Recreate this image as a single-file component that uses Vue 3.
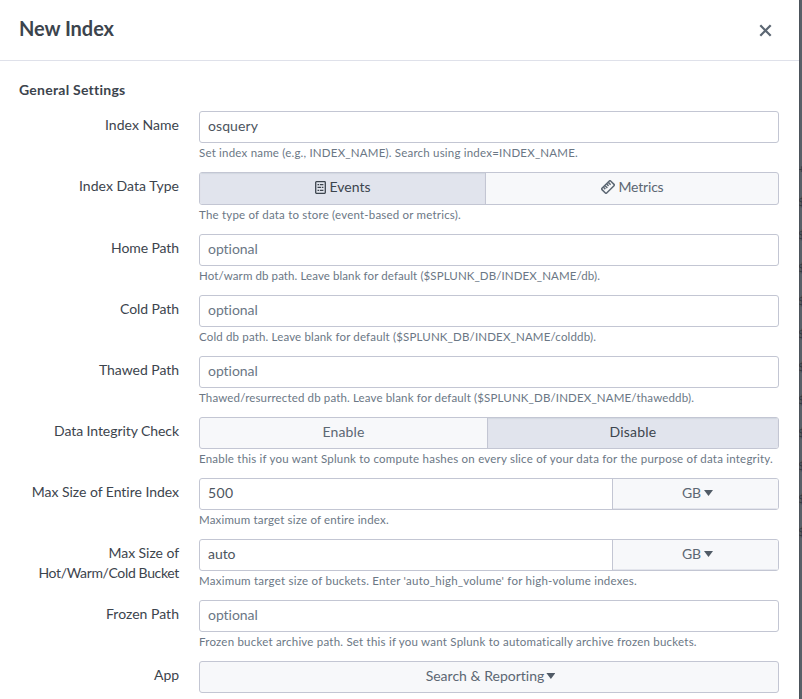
<script setup>
const rows = [
  { label: ['Index Name'], lw: [74], type: 'text', value: 'osquery', vw: 50, help: 'Set index name (e.g., INDEX_NAME). Search using index=INDEX_NAME.', hw: 379 },
  { label: ['Index Data Type'], lw: [100], type: 'toggle', tall: true, split: 285, options: [{ text: 'Events', w: 41, icon: 'events', on: true }, { text: 'Metrics', w: 45, icon: 'metrics' }], help: 'The type of data to store (event-based or metrics).', hw: 262 },
  { label: ['Home Path'], lw: [68], type: 'text', value: 'optional', hint: true, vw: 50, help: 'Hot/warm db path. Leave blank for default ($SPLUNK_DB/INDEX_NAME/db).', hw: 401 },
  { label: ['Cold Path'], lw: [59], type: 'text', value: 'optional', hint: true, vw: 50, help: 'Cold db path. Leave blank for default ($SPLUNK_DB/INDEX_NAME/colddb).', hw: 397 },
  { label: ['Thawed Path'], lw: [80], type: 'text', value: 'optional', hint: true, vw: 50, help: 'Thawed/resurrected db path. Leave blank for default ($SPLUNK_DB/INDEX_NAME/thaweddb).', hw: 495 },
  { label: ['Data Integrity Check'], lw: [125], type: 'toggle', split: 287, options: [{ text: 'Enable', w: 42 }, { text: 'Disable', w: 47, on: true }], help: 'Enable this if you want Splunk to compute hashes on every slice of your data for the purpose of data integrity.', hw: 574 },
  { label: ['Max Size of Entire Index'], lw: [147.5], type: 'size', value: '500', vw: 25.5, help: 'Maximum target size of entire index.', hw: 190 },
  { label: ['Max Size of', 'Hot/Warm/Cold Bucket'], lw: [70.5, 140.5], type: 'size', value: 'auto', vw: 27.5, help: "Maximum target size of buckets. Enter 'auto_high_volume' for high-volume indexes.", hw: 438 },
  { label: ['Frozen Path'], lw: [73], type: 'text', value: 'optional', hint: true, vw: 50, help: 'Frozen bucket archive path. Set this if you want Splunk to automatically archive frozen buckets.', hw: 498 },
  { label: ['App'], lw: [25], type: 'select', value: 'Search & Reporting', vw: 119 },
]
const marks = Array.from({ length: 11 }, (_, i) => i)

// Tracks each string so that it fills the width given for it.
const vFit = {
  mounted(el, { value }) {
    const natural = el.getBoundingClientRect().width
    const spacing = (value - natural) / el.textContent.length
    el.style.letterSpacing = `${spacing}px`
  },
}
</script>

<template>
  <div class="page">
    <section class="modal">
      <header class="head">
        <h1><span v-fit="95">New Index</span></h1>
        <svg class="close" viewBox="0 0 12 12"><path d="M1.2 1.2 10.8 10.8M10.8 1.2 1.2 10.8" /></svg>
      </header>
      <div class="body">
        <h2><span v-fit="106">General Settings</span></h2>
        <div v-for="row in rows" :key="row.label[0]" class="row">
          <div class="label">
            <div v-for="(line, i) in row.label" :key="line"><span v-fit="row.lw[i]">{{ line }}</span></div>
          </div>
          <div class="field">
            <div v-if="row.type === 'text'" class="control input" :class="{ hint: row.hint }">
              <span v-fit="row.vw">{{ row.value }}</span>
            </div>
            <div v-else-if="row.type === 'toggle'" class="control toggle" :class="{ tall: row.tall }" :style="{ gridTemplateColumns: row.split + 'px 1fr' }">
              <div v-for="o in row.options" :key="o.text" class="option" :class="{ on: o.on }">
                <svg v-if="o.icon === 'events'" class="events" viewBox="0 0 11 13">
                  <rect x=".7" y=".7" width="9.6" height="11.6" rx=".7" />
                  <path d="M2.5 3.6h1.6M4.9 3.6h3.5M2.5 6.4h3.5M6.8 6.4h1.6M2.5 9.3h1.6M4.9 9.3h3.5" />
                </svg>
                <svg v-if="o.icon === 'metrics'" class="metrics" viewBox="0 0 14 14">
                  <g transform="rotate(-45 7 7)">
                    <rect x=".9" y="3.7" width="12.2" height="6.6" rx=".9" />
                    <path d="M3.6 4v2.6M5.9 4v3.2M8.2 4v2.6M10.5 4v3.2" />
                  </g>
                </svg>
                <span v-fit="o.w">{{ o.text }}</span>
              </div>
            </div>
            <div v-else-if="row.type === 'size'" class="control size">
              <div class="amount"><span v-fit="row.vw">{{ row.value }}</span></div>
              <div class="unit"><span v-fit="19">GB</span><i class="caret"></i></div>
            </div>
            <div v-else class="control select"><span v-fit="row.vw">{{ row.value }}</span><i class="caret"></i></div>
            <p v-if="row.help" class="help"><span v-fit="row.hw">{{ row.help }}</span></p>
          </div>
        </div>
      </div>
    </section>
    <aside class="backdrop">
      <div class="mark plus">+</div>
      <div v-for="m in marks" :key="m" class="mark">$</div>
    </aside>
  </div>
</template>

<style>
body { overflow: hidden; }
</style>

<style scoped>
.page { display: flex; width: 802px; height: 699px; overflow: hidden; background: #fff; font-family: Lato, "Open Sans", sans-serif; font-size: 14px; line-height: 20px; color: #3c444d; }
.page * { box-sizing: border-box; }
span { white-space: nowrap; }
.modal { width: 799px; height: 699px; overflow: hidden; }
.head { display: flex; justify-content: space-between; align-items: flex-start; height: 61px; padding: 16px 27px 0 19px; border-bottom: 1px solid #dfe1ea; }
h1 { margin: 0; font-size: 20px; line-height: 25px; font-weight: 700; }
.close { width: 13px; height: 13px; margin-top: 8px; fill: none; stroke: #5c6773; stroke-width: 2.1; }
.body { padding: 19px 20px 0 19px; }
h2 { margin: 0 0 11px; font-size: 14px; line-height: 20px; font-weight: 700; }
.row { display: flex; gap: 20px; }
.label { width: 160px; padding-top: 4px; text-align: right; }
.field { width: 580px; }
.control { height: 32px; border: 1px solid #c3c6d3; border-radius: 3px; color: #5c6773; }
.input { display: flex; align-items: center; padding: 0 8px 2px; color: #4d5560; }
.hint { color: #6b7785; }
.toggle { display: grid; background: #f7f8fa; overflow: hidden; }
.tall { height: 33px; }
.option { display: flex; justify-content: center; align-items: center; gap: 4px; padding-bottom: 2px; }
.tall .option { padding-bottom: 3px; }
.option + .option { border-left: 1px solid #c3c6d3; }
.on { background: #e1e4ed; color: #3c444d; box-shadow: inset 0 1px 1px #d2d8e0; }
.option svg { fill: none; stroke: currentColor; }
.events { width: 11px; height: 13px; stroke-width: 1.3; }
.metrics { width: 14px; height: 14px; stroke-width: 1.5; }
.size { display: flex; overflow: hidden; }
.amount { display: flex; align-items: center; width: 412px; padding: 0 0 2px 8px; color: #4d5560; }
.unit { display: flex; flex: 1; justify-content: center; align-items: center; gap: 3px; padding: 0 0 2px 4px; border-left: 1px solid #c3c6d3; background: #f7f8fa; box-shadow: inset 0 -1px 0 #e4e6ed; }
.select { display: flex; justify-content: center; align-items: center; gap: 2px; padding: 0 0 2px 3px; background: #f7f8fa; }
.caret { width: 9px; height: 6px; background: #515b66; clip-path: polygon(0 0, 100% 0, 50% 100%); }
.help { margin: 0 0 9px; height: 20px; font-size: 11.5px; line-height: 20px; color: #6b7785; }
.backdrop { width: 3px; height: 699px; padding-top: 152px; overflow: hidden; background: #596068; box-shadow: inset 1px 0 0 #4c535b; }
.mark { height: 33px; font-size: 12px; line-height: 33px; color: #343a41; text-indent: -1px; }
</style>
